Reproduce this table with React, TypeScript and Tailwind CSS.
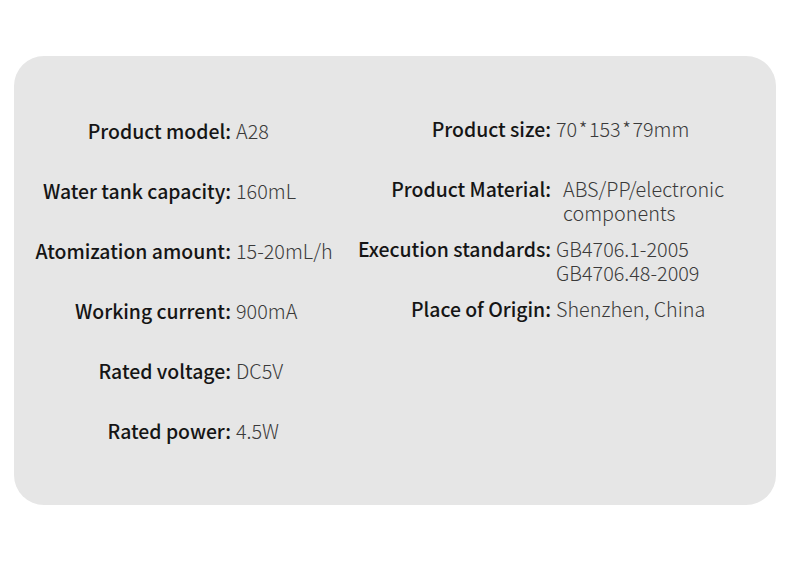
const left = [
  ["Product model:", ["A28"]],
  ["Water tank capacity:", ["160mL"]],
  ["Atomization amount:", ["15-20mL/h"]],
  ["Working current:", ["900mA"]],
  ["Rated voltage:", ["DC5V"]],
  ["Rated power:", ["4.5W"]],
] as const;

const right = [
  ["Product size:", ["70*153*79mm"], false],
  ["Product Material:", ["ABS/PP/electronic", "components"], true],
  ["Execution standards:", ["GB4706.1-2005", "GB4706.48-2009"], false],
  ["Place of Origin:", ["Shenzhen, China"], false],
] as const;

// the source font draws a wider asterisk
function Value({ text }: { text: string }) {
  const parts = text.split("*");
  return (
    <div>
      {parts.map((p, i) => (
        <span key={i}>
          {i > 0 && <span className="mx-[1.5px]">*</span>}
          {p}
        </span>
      ))}
    </div>
  );
}

function Row({ label, lines, wide }: { label: string; lines: readonly string[]; wide?: boolean }) {
  return (
    <>
      <div className="text-right font-medium text-[#151515] text-[19.4px] leading-[24px] h-[60px]">{label}</div>
      <div className={`font-light text-[#3a3a3a] text-[19.8px] leading-[24px] h-[60px] ${wide ? "pl-[7px]" : ""}`}>
        {lines.map((l) => (
          <Value key={l} text={l} />
        ))}
      </div>
    </>
  );
}

export default function App() {
  return (
    <div
      className="w-[790px] h-[563px] bg-white pt-[56px] pl-[14px]"
      style={{ fontFamily: '"Noto Sans CJK SC", "Noto Sans", sans-serif' }}
    >
      <div className="w-[762px] h-[449px] bg-[#e6e6e6] rounded-[30px] flex">
        <div className="grid grid-cols-[203px_auto] gap-x-[5px] content-start pl-[14px] pt-[63px] w-[320px]">
          {left.map(([l, v]) => (
            <Row key={l} label={l} lines={v} />
          ))}
        </div>
        <div className="grid grid-cols-[203px_auto] gap-x-[5px] content-start pt-[61px] pl-[14px]">
          {right.map(([l, v, w]) => (
            <Row key={l} label={l} lines={v} wide={w} />
          ))}
        </div>
      </div>
    </div>
  );
}
